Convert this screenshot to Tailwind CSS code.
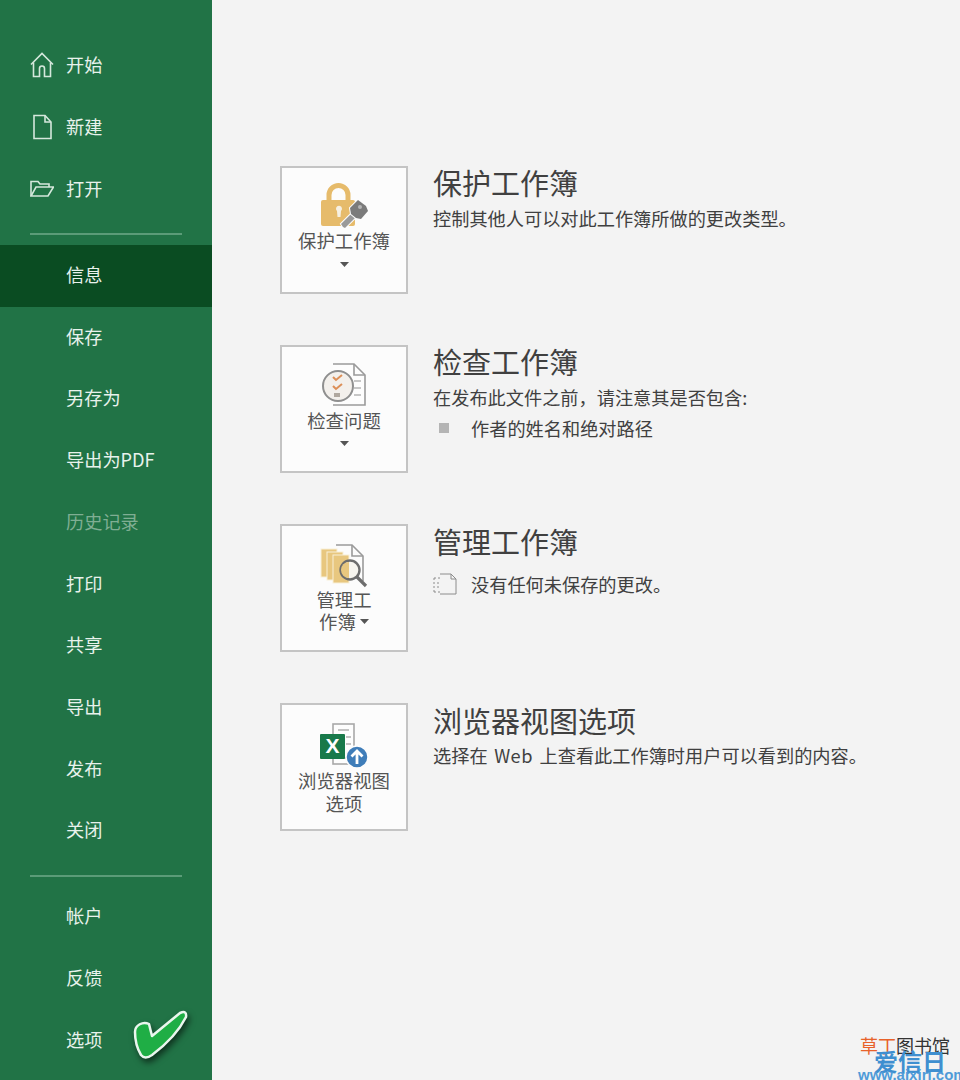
<!doctype html>
<html lang="zh-CN">
<head>
    <meta charset="UTF-8">
    <script src="https://cdn.jsdelivr.net/npm/@tailwindcss/browser@4"></script>
    <title>信息</title>
</head>
<body class="m-0 bg-[#f3f3f3]">
<div class="relative flex w-[960px] h-[1080px] overflow-hidden bg-[#f3f3f3] font-['Noto_Sans_CJK_SC','Noto_Sans',sans-serif]">

    <!-- sidebar -->
    <nav class="w-[212px] h-full shrink-0 bg-[#217346] pt-[34px] text-[18.2px] text-[#e8f2ec]">
        <div class="flex items-center h-[61.7px] pl-[30px] gap-[12px]">
            <svg class="w-[24px] h-[26px]" viewBox="0 0 24 26" fill="none" stroke="#d5e8dc" stroke-width="1.6"><path d="M1 12.5 12 1.5l11 11"/><path d="M3.5 10.5V24.5H9.5V16.5a2.500 2.500 0 0 1 5 0V24.5H20.5V10.5"/></svg>
            <span>开始</span>
        </div>
        <div class="flex items-center h-[61.7px] pl-[30px] gap-[12px]">
            <svg class="w-[24px] h-[26px]" viewBox="0 0 24 26" fill="none" stroke="#d5e8dc" stroke-width="1.6"><path d="M4 1.5H15L21 8V24.5H4Z"/><path d="M15 1.5V8H21"/></svg>
            <span>新建</span>
        </div>
        <div class="flex items-center h-[61.7px] pl-[30px] gap-[12px]">
            <svg class="w-[24px] h-[26px]" viewBox="0 0 24 26" fill="none" stroke="#d5e8dc" stroke-width="1.6"><path d="M1 21V6.5H8L10 9H19V12"/><path d="M1 21H18L23.5 12H6Z"/></svg>
            <span>打开</span>
        </div>
        <div class="mx-[30px] mt-[14px] mb-[10px] h-[2px] bg-[#5b9c78]"></div>

        <div class="flex items-center h-[62px] pl-[66px] pb-[3px] bg-[#0a4c22]">信息</div>
        <div class="flex items-center h-[61.7px] pl-[66px] pb-[3px]">保存</div>
        <div class="flex items-center h-[61.7px] pl-[66px] pb-[3px]">另存为</div>
        <div class="flex items-center h-[61.7px] pl-[66px] pb-[3px]">导出为PDF</div>
        <div class="flex items-center h-[61.7px] pl-[66px] pb-[3px] text-[#7fae93]">历史记录</div>
        <div class="flex items-center h-[61.7px] pl-[66px] pb-[3px]">打印</div>
        <div class="flex items-center h-[61.7px] pl-[66px] pb-[3px]">共享</div>
        <div class="flex items-center h-[61.7px] pl-[66px] pb-[3px]">导出</div>
        <div class="flex items-center h-[61.7px] pl-[66px] pb-[3px]">发布</div>
        <div class="flex items-center h-[61.7px] pl-[66px] pb-[3px]">关闭</div>
        <div class="mx-[30px] mt-[13px] mb-[9px] h-[2px] bg-[#5b9c78]"></div>

        <div class="flex items-center h-[61.7px] pl-[66px] pb-[3px]">帐户</div>
        <div class="flex items-center h-[61.7px] pl-[66px] pb-[3px]">反馈</div>
        <div class="flex items-center h-[61.7px] pl-[66px] pb-[2px]">选项</div>
    </nav>

    <!-- main -->
    <main class="flex-1 pt-[166px] pl-[68px] flex flex-col gap-[51px] text-[#404040]">

        <section class="flex gap-[25px]">
            <div class="w-[128px] h-[128px] shrink-0 bg-[#fcfcfc] border-2 border-[#c4c4c4] flex flex-col items-center pt-[15px] text-[18.4px] leading-[22px] text-[#555555]">
                <svg class="w-[48px] h-[46px]" viewBox="0 0 48 46">
                    <path d="M9 19V12a9.500 9.500 0 0 1 19 0v7" fill="none" stroke="#e6bb6b" stroke-width="5"/>
                    <rect x="1" y="17" width="34" height="26" rx="2" fill="#e6bb6b"/>
                    <path d="M16 26a3 3 0 1 1 5 2l-.5 6h-3l-.5-6a3 3 0 0 1-1-2Z" fill="#f6f0e2"/>
                    <g stroke="#fcfcfc" stroke-width="2" paint-order="stroke">
                        <path d="M23 44 21 41 33 29 37 33 25 45Z" fill="#9a9a9a"/>
                        <path d="M30 25 38 17 46 23 48 28 41 36 36 35 31 31Z" fill="#7b7b7b"/>
                    </g>
                    <circle cx="40" cy="24" r="2" fill="#b5b5b5"/>
                </svg>
                <span class="mt-0">保护工作簿</span>
                <svg class="w-[9px] h-[5px] mt-[11px]" viewBox="0 0 9 5"><path d="M0 0h9L4.500 5Z" fill="#555555"/></svg>
            </div>
            <div>
                <h2 class="text-[29px] leading-[36px] font-normal -mt-[2px]">保护工作簿</h2>
                <p class="text-[18.2px] leading-[24px] mt-[6px]">控制其他人可以对此工作簿所做的更改类型。</p>
            </div>
        </section>

        <section class="flex gap-[25px]">
            <div class="w-[128px] h-[128px] shrink-0 bg-[#fcfcfc] border-2 border-[#c4c4c4] flex flex-col items-center pt-[15px] text-[18.4px] leading-[22px] text-[#555555]">
                <svg class="w-[46px] h-[46px]" viewBox="0 0 46 46" fill="none">
                    <path d="M12 2H33L44 13V43H12" stroke="#9a9a9a" stroke-width="1.6" fill="#fdfdfd"/>
                    <path d="M33 2V13H44" stroke="#9a9a9a" stroke-width="1.6"/>
                    <path d="M33 19h7M33 26h7M33 33h7" stroke="#b5b5b5" stroke-width="1.6"/>
                    <circle cx="17" cy="24" r="15" fill="#f3f0ec" stroke="#8f8f8f" stroke-width="2"/>
                    <path d="M12 15l3 3 6-5M12 24l3 3 6-5" stroke="#dc8f58" stroke-width="2"/>
                    <rect x="13" y="31" width="6" height="4" fill="#b0a89f"/>
                </svg>
                <span class="mt-[1px]">检查问题</span>
                <svg class="w-[9px] h-[5px] mt-[10px]" viewBox="0 0 9 5"><path d="M0 0h9L4.500 5Z" fill="#555555"/></svg>
            </div>
            <div>
                <h2 class="text-[29px] leading-[36px] font-normal -mt-[2px]">检查工作簿</h2>
                <p class="text-[18.2px] leading-[24px] mt-[6px]">在发布此文件之前，请注意其是否包含:</p>
                <div class="flex items-center mt-[7px] text-[18.2px] leading-[24px]">
                    <span class="w-[10px] h-[10px] ml-[6px] mr-[22px] bg-[#b4b4b4]"></span>
                    <span>作者的姓名和绝对路径</span>
                </div>
            </div>
        </section>

        <section class="flex gap-[25px]">
            <div class="w-[128px] h-[128px] shrink-0 bg-[#fcfcfc] border-2 border-[#c4c4c4] flex flex-col items-center pt-[17px] text-[18.4px] leading-[22px] text-[#555555]">
                <svg class="w-[48px] h-[46px]" viewBox="0 0 48 46" fill="none">
                    <path d="M16 2H32L43 13V38" stroke="#9a9a9a" stroke-width="1.6"/>
                    <path d="M32 2V13H43" stroke="#9a9a9a" stroke-width="1.6"/>
                    <rect x="1" y="6" width="16" height="28" fill="#e8c77f" stroke="#f8efd8"/>
                    <rect x="7" y="9" width="16" height="28" fill="#e8c77f" stroke="#f8efd8"/>
                    <rect x="13" y="12" width="16" height="28" fill="#e8c77f" stroke="#f8efd8"/>
                    <circle cx="30" cy="27" r="9.500" fill="#f6f4ee" stroke="#6d6d6d" stroke-width="2.400"/>
                    <path d="M29 19a8 8 0 0 0 0 16Z" fill="#e8c77f"/>
                    <path d="M37 34l9 9" stroke="#6d6d6d" stroke-width="3.200"/>
                </svg>
                <span class="-mt-[1px]">管理工</span>
                <span class="flex items-center">作簿<svg class="w-[9px] h-[5px] ml-[4px]" viewBox="0 0 9 5"><path d="M0 0h9L4.500 5Z" fill="#555555"/></svg></span>
            </div>
            <div>
                <h2 class="text-[29px] leading-[36px] font-normal -mt-[1px]">管理工作簿</h2>
                <div class="flex items-center mt-[13px] text-[18.2px] leading-[24px]">
                    <svg class="w-[24px] h-[22px] mr-[14px]" viewBox="0 0 24 22" fill="none" stroke="#8c8c8c"><path d="M7 1H18L23 6V21H7"/><path d="M18 1V6H23"/><path d="M1 5h8M1 5v14M1 19h8M4 10h3M4 14h3" stroke-dasharray="2 2"/></svg>
                    <span>没有任何未保存的更改。</span>
                </div>
            </div>
        </section>

        <section class="flex gap-[25px]">
            <div class="w-[128px] h-[128px] shrink-0 bg-[#fcfcfc] border-2 border-[#c4c4c4] flex flex-col items-center pt-[17px] text-[18.4px] leading-[23px] text-[#555555]">
                <svg class="w-[50px] h-[46px]" viewBox="0 0 50 46" fill="none">
                    <rect x="14" y="2" width="21" height="40" fill="#fdfdfd" stroke="#a8a8a8" stroke-width="1.600"/>
                    <path d="M19 8h11M27 15h5M27 22h5M20 36h9" stroke="#b0b0b0" stroke-width="1.600"/>
                    <rect x="1" y="12" width="25" height="25" rx="1" fill="#18794a"/>
                    <text x="13.500" y="31" text-anchor="middle" font-family="Liberation Sans" font-weight="700" font-size="21" fill="#ffffff">X</text>
                    <circle cx="38" cy="35" r="11" fill="#3f7db9" stroke="#fdfdfd" stroke-width="1.500"/>
                    <path d="M38 42V29M32.500 34.500 38 29l5.500 5.500" stroke="#ffffff" stroke-width="2.800"/>
                </svg>
                <span class="mt-[1px]">浏览器视图</span>
                <span>选项</span>
            </div>
            <div>
                <h2 class="text-[29px] leading-[36px] font-normal -mt-[1px]">浏览器视图选项</h2>
                <p class="text-[18.2px] leading-[24px] mt-[5px]">选择在<span class="mx-[2px] tracking-[0.5px]"> Web </span>上查看此工作簿时用户可以看到的内容。</p>
            </div>
        </section>
    </main>

    <!-- check mark stamped over the sidebar -->
    <svg class="absolute left-[130px] top-[1005px] w-[62px] h-[60px] drop-shadow-[2px_4px_3px_rgba(0,0,0,0.55)]" viewBox="0 0 62 60">
        <path d="M5 27C5 20 13 16 19 19L22 31 50 8Q57 5 56 12 46 32 22 50 15 55 11 50 5 40 5 27Z" fill="#1fae45" stroke="#eaf6ee" stroke-width="2.500" stroke-linejoin="round"/>
    </svg>

    <!-- watermark -->
    <div class="absolute left-[860px] top-[1033px] w-[100px] text-[18px] leading-[24px] text-[#333333] whitespace-nowrap"><span class="text-[#e8622a]">草丁</span>图书馆</div>
    <div class="absolute left-[874px] top-[1047px] text-[24px] leading-[28px] font-bold text-[#3f8fd0] whitespace-nowrap">爱信日</div>
    <div class="absolute left-[858px] top-[1067px] text-[15px] leading-[16px] font-bold text-[#4f9bd8] font-['Liberation_Sans',sans-serif] whitespace-nowrap">www.aixiri.com</div>
</div>
</body>
</html>
